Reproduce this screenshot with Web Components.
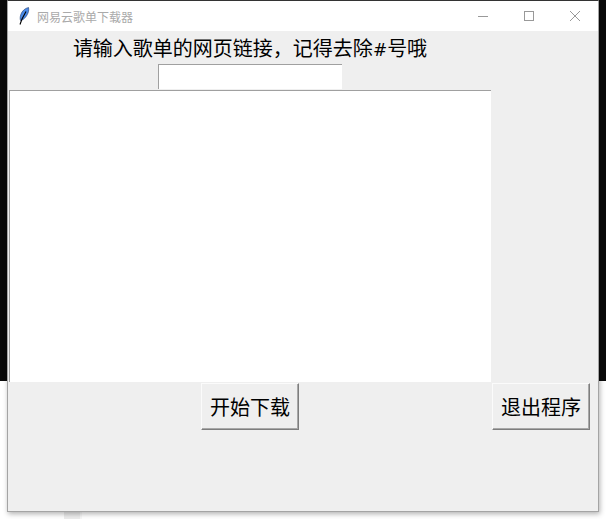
<!DOCTYPE html>
<html>
  <head>
    <meta charset="utf-8" />
    <style>
      html, body { margin: 0; padding: 0; }
      body { width: 606px; height: 519px; overflow: hidden; background: #fff; }
    </style>
    <script type="text/javascript">
      const CJK = '"Noto Sans CJK SC", "Liberation Sans", sans-serif';

      class DesktopBackdrop extends HTMLElement {
        constructor() {
          super();
          this.attachShadow({ mode: 'open' });
          this.shadowRoot.innerHTML = `
            <style>
              :host { display: block; position: relative; width: 606px; height: 519px; overflow: hidden;
                background: linear-gradient(#0a0a0a 0 381px, #fff 381px); }
              .stub { position: absolute; left: 64px; top: 512px; width: 16px; height: 7px; background: #ececec; }
              .stub2 { position: absolute; left: 80px; top: 512px; width: 2px; height: 7px; background: #f7f7f7; }
            </style>
            <div class="stub"></div><div class="stub2"></div>
            <slot></slot>`;
        }
      }

      class TitleBar extends HTMLElement {
        constructor() {
          super();
          this.attachShadow({ mode: 'open' });
          this.shadowRoot.innerHTML = `
            <style>
              :host { display: flex; align-items: center; height: 30px; background: #fff; }
              .icon { width: 16px; height: 18px; margin-left: 7px; flex: none; }
              .title { margin-left: 6px; flex: 1; font: 12px ${CJK}; color: #aaa; white-space: nowrap; }
              .btn { width: 46px; height: 30px; display: flex; align-items: center; justify-content: center; }
              .btn svg { width: 12px; height: 12px; display: block; }
            </style>
            <svg class="icon" viewBox="0 0 16 18">
              <path d="M13.500 .5C10 1.200 7 4 5.800 7.500 5 10 5 12 5.500 13.500 9 13 12.500 8.500 13.500 4.500c.3-1.400.3-3 0-4z" fill="#4a8ae8" stroke="#1c3a70" stroke-width=".6"/>
              <path d="M11 4.500 7 12 5 17.500" fill="none" stroke="#000" stroke-width="1.100"/>
            </svg>
            <span class="title"><slot></slot></span>
            <div class="btn"><svg viewBox="0 0 12 12"><path d="M1 6.500h10" stroke="#999" fill="none"/></svg></div>
            <div class="btn"><svg viewBox="0 0 12 12"><rect x="1.500" y="1.500" width="9" height="9" stroke="#999" fill="none"/></svg></div>
            <div class="btn"><svg viewBox="0 0 12 12"><path d="M1 1l10 10M11 1 1 11" stroke="#999" fill="none"/></svg></div>`;
        }
      }

      class TkButton extends HTMLElement {
        constructor() {
          super();
          this.attachShadow({ mode: 'open' });
          this.shadowRoot.innerHTML = `
            <style>
              :host { display: block; }
              button { display: block; width: 98px; height: 47px; padding: 0; margin: 0; box-sizing: border-box;
                background: #efefef; color: #000; font: 20px ${CJK}; line-height: 1;
                border: 1px solid; border-color: #fbfbfb #7e7e7e #7e7e7e #fbfbfb;
                box-shadow: inset -1px -1px 0 #a8a8a8; border-radius: 0; }
            </style>
            <button><slot></slot></button>`;
        }
      }

      class TkEntry extends HTMLElement {
        constructor() {
          super();
          this.attachShadow({ mode: 'open' });
          this.shadowRoot.innerHTML = `
            <style>
              :host { display: block; width: 184px; height: 25px; box-sizing: border-box; background: #fff;
                border-top: 1px solid #a0a0a0; border-left: 1px solid #a0a0a0; }
            </style>`;
        }
      }

      class TkText extends HTMLElement {
        constructor() {
          super();
          this.attachShadow({ mode: 'open' });
          this.shadowRoot.innerHTML = `
            <style>
              :host { display: block; width: 482px; height: 292px; box-sizing: border-box; background: #fff;
                border-top: 1px solid #a0a0a0; border-left: 1px solid #a0a0a0; }
            </style>`;
        }
      }

      class DownloaderWindow extends HTMLElement {
        constructor() {
          super();
          this.attachShadow({ mode: 'open' });
          this.shadowRoot.innerHTML = `
            <style>
              :host { display: block; position: absolute; left: 7px; top: 0; width: 592px; height: 512px;
                box-sizing: border-box; border: 1px solid #a4a4a4; border-top-color: #333;
                background: #efefef; box-shadow: 1px 2px 5px rgba(0,0,0,.3); }
              .body { display: grid; grid-template-columns: 482px 1px 98px; grid-template-rows: 33px 26px 292px 47px;
                justify-items: center; align-items: start; padding-left: 1px; }
              .label { font: 20px/33px ${CJK}; color: #000; white-space: nowrap; }
              .hash { font: 17px/33px "DejaVu Sans", sans-serif; }
              .entry { grid-column: 1; grid-row: 2; }
              .text { grid-column: 1; grid-row: 3; }
              .start { grid-column: 1; grid-row: 4; margin-top: 1px; }
              .quit { grid-column: 3; grid-row: 4; margin-top: 1px; }
            </style>
            <title-bar>网易云歌单下载器</title-bar>
            <div class="body">
              <div class="label">请输入歌单的网页链接，记得去除<span class="hash">#</span>号哦</div>
              <tk-entry class="entry"></tk-entry>
              <tk-text class="text"></tk-text>
              <tk-button class="start">开始下载</tk-button>
              <tk-button class="quit">退出程序</tk-button>
            </div>`;
        }
      }

      customElements.define('desktop-backdrop', DesktopBackdrop);
      customElements.define('title-bar', TitleBar);
      customElements.define('tk-button', TkButton);
      customElements.define('tk-entry', TkEntry);
      customElements.define('tk-text', TkText);
      customElements.define('downloader-window', DownloaderWindow);
    </script>
  </head>
  <body>
    <desktop-backdrop>
      <downloader-window></downloader-window>
    </desktop-backdrop>
  </body>
</html>
